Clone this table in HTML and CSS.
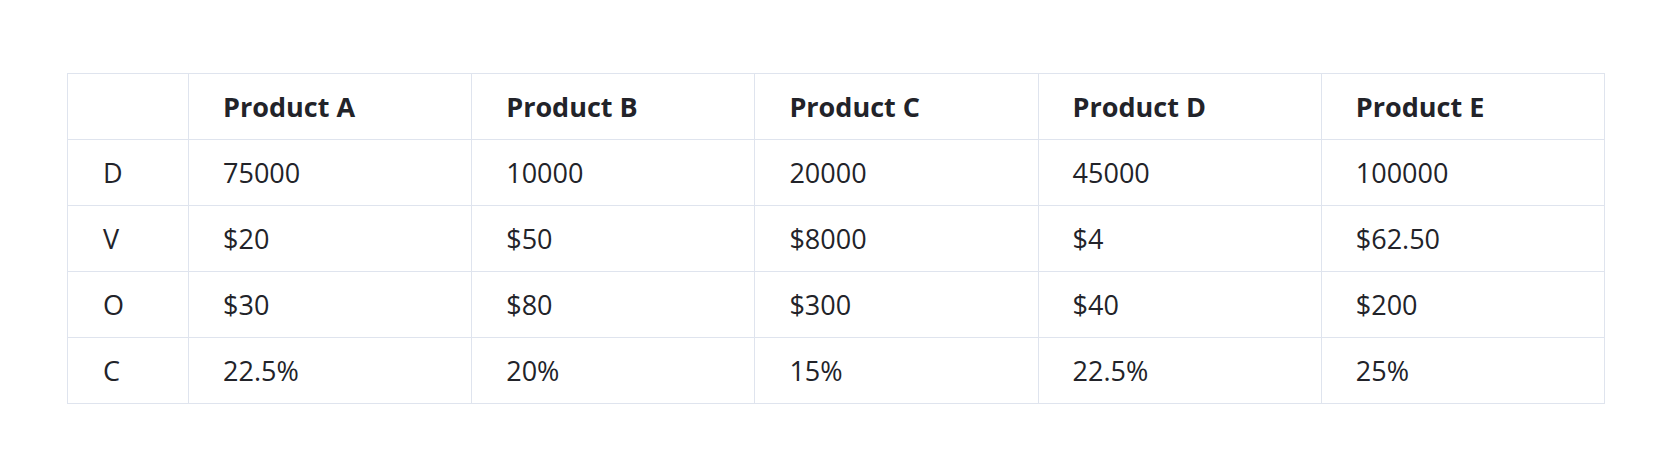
FILE: index.html
```html
<!DOCTYPE html>
<html>
<head>
<meta charset="utf-8">
<link rel="stylesheet" href="styles.css">
</head>
<body>
<div class="page">
<table class="data">
  <colgroup>
    <col class="c-index">
    <col class="c-val"><col class="c-val"><col class="c-val"><col class="c-val"><col class="c-val">
  </colgroup>
  <thead>
    <tr><th></th><th>Product A</th><th>Product B</th><th>Product C</th><th>Product D</th><th>Product E</th></tr>
  </thead>
  <tbody>
    <tr><td class="idx">D</td><td>75000</td><td>10000</td><td>20000</td><td>45000</td><td>100000</td></tr>
    <tr><td class="idx">V</td><td>$20</td><td>$50</td><td>$8000</td><td>$4</td><td>$62.50</td></tr>
    <tr><td class="idx">O</td><td>$30</td><td>$80</td><td>$300</td><td>$40</td><td>$200</td></tr>
    <tr><td class="idx">C</td><td>22.5%</td><td>20%</td><td>15%</td><td>22.5%</td><td>25%</td></tr>
  </tbody>
</table>
</div>
</body>
</html>
```
FILE: styles.css
```css
html, body {
  margin: 0;
  padding: 0;
  background: #ffffff;
}
.page {
  padding: 73px 0 0 67px;
}
.data {
  border-collapse: collapse;
  table-layout: fixed;
  width: 1538px;
  font-family: "Open Sans", "Noto Sans", sans-serif;
  font-size: 27px;
  color: #222329;
}
.c-index { width: 121px; }
.data th, .data td {
  border: 1px solid #dfe4ee;
  height: 65px;
  padding: 0 0 0 34px;
  text-align: left;
  vertical-align: middle;
  white-space: nowrap;
}
.data th {
  font-weight: 700;
}
.data td {
  font-weight: 400;
}
.data td.idx {
  padding-left: 35px;
}
```
